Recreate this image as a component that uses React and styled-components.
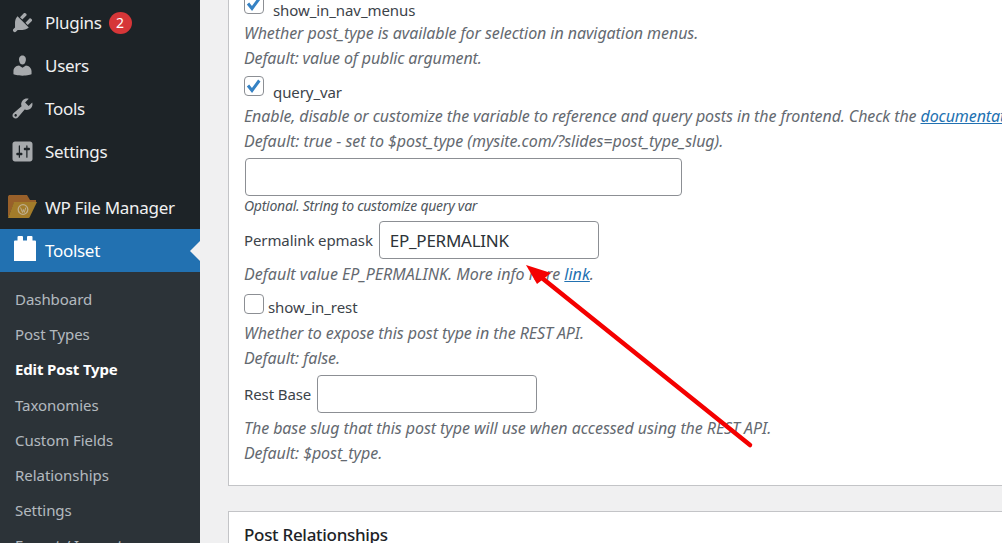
import React from 'react';
import styled, { createGlobalStyle } from 'styled-components';

const Global = createGlobalStyle`
  html, body { margin: 0; padding: 0; height: 543px; overflow: hidden; background: #f0f0f1; }
  #root { height: 543px; }
  * { box-sizing: border-box; }
`;
const Page = styled.div`
  position: relative; display: flex; width: 1002px; height: 543px; overflow: hidden;
  font-family: "Noto Sans", "Open Sans", sans-serif; background: #f0f0f1;
`;
const Sidebar = styled.nav`
  flex: 0 0 200px; width: 200px; height: 543px; background: #1d2327; padding-top: 1px; overflow: hidden;
`;
const MenuItem = styled.div`
  position: relative; display: flex; align-items: center; height: 43px; padding-left: 12px; gap: 12px;
  font-size: 17px; letter-spacing: -0.3px;
  background: ${p => (p.$active ? '#2271b1' : 'transparent')};
  margin-top: ${p => p.$gap || 0}px;
  color: ${p => (p.$active ? '#fff' : '#f0f0f1')};
`;
const IconSlot = styled.span`
  display: flex; align-items: center; justify-content: center; width: 21px; height: 21px; flex: none;
`;
const Badge = styled.span`
  display: flex; align-items: center; justify-content: center; width: 23px; height: 22px; border-radius: 50%;
  background: #d63638; color: #fff; font-size: 14px; margin-left: -5px; letter-spacing: 0;
`;
const Notch = styled.span`
  position: absolute; right: 0; top: 50%; margin-top: -10px; border: 10px solid transparent;
  border-left-width: 0; border-right-color: #f0f0f1;
`;
const SubMenu = styled.div`
  background: #2c3338; padding-top: 10px; height: 300px;
`;
const SubItem = styled.div`
  height: 35.2px; line-height: 35.2px; padding-left: 15px; font-size: 15px;
  letter-spacing: ${p => (p.$current ? '-0.15px' : '-0.05px')};
  color: ${p => (p.$current ? '#fff' : 'rgba(240,246,252,.7)')};
  font-weight: ${p => (p.$current ? 700 : 400)};
`;
const Main = styled.main`
  flex: 1; min-width: 0; padding-left: 28px; margin-top: -27px;
`;
const Card = styled.section`
  width: 900px; background: #fff; border: 1px solid #c3c4c7; border-right: 0;
  padding: ${p => p.$pad || '0 15px'};
  margin-bottom: 25px; height: ${p => p.$h}px;
`;
const CardSpacer = styled.div`
  height: 20px;
`;
const CheckRow = styled.label`
  display: flex; align-items: flex-start; height: 20px;
  margin-top: ${p => p.$mt || 0}px; gap: ${p => p.$gap || 9}px;
  font-size: 15px; color: #3c434a; letter-spacing: -0.08px;
`;
const CheckBox = styled.span`
  flex: none; display: flex; align-items: center; justify-content: center; width: 20px; height: 20px;
  border: 1px solid #8c8f94; border-radius: 4px; background: #fff;
`;
const CheckLabel = styled.span`
  line-height: 20px; margin-top: ${p => p.$mt || 0}px;
`;
const Hint = styled.p`
  margin: ${p => p.$mt || 0}px 0 0; font-size: 16px; line-height: 24.6px; height: 24.6px; font-style: italic;
  color: #646970; white-space: nowrap; letter-spacing: ${p => p.$sp || '-0.07px'};
`;
const SmallHint = styled.p`
  margin: 0; font-size: 14px; line-height: 20px; font-style: italic; color: #50575e; white-space: nowrap;
  letter-spacing: -0.25px;
`;
const Link = styled.a`
  color: #2271b1; text-decoration: underline;
`;
const TextInput = styled.div`
  display: flex; align-items: center; flex: none;
  width: ${p => p.$w}px; height: 38px; margin-left: ${p => p.$ml || 0}px; margin-top: ${p => p.$mt || 0}px;
  padding: 0 10px; background: #fff; border: 1px solid #8c8f94; border-radius: 4px;
  font-size: 17px; color: #2c3338; letter-spacing: -0.25px;
`;
const FieldRow = styled.div`
  display: flex; align-items: center; gap: 6px; margin-top: ${p => p.$mt || 0}px;
  font-size: 15px; color: #3c434a; letter-spacing: -0.1px;
`;
const CardTitle = styled.h2`
  margin: 0; font-size: 17px; line-height: 24px; font-weight: 500; color: #1d2327; letter-spacing: -0.3px;
`;
const ArrowLayer = styled.svg`
  position: absolute; left: 0; top: 0; pointer-events: none;
`;
const DashSvg = styled.svg`
  flex: none;
`;
const TickSvg = styled.svg`
  flex: none; margin: -1px;
`;
const FolderSvg = styled.svg`
  flex: none; margin: -2px -5px 0 -4px;
`;
const ToolsetSvg = styled.svg`
  flex: none; margin: -4px 0 0 5px;
`;

const Dash = ({ d, color = '#a7aaad' }) => (
  <DashSvg width="25" height="25" viewBox="0 0 20 20" fill={color}><path d={d} fillRule="evenodd" /></DashSvg>
);
const Tick = () => (
  <TickSvg width="20" height="20" viewBox="0 0 20 20"><path d="M4 9.500l4 5L15.300 4.500" fill="none" stroke="#3582c4" strokeWidth="3" /></TickSvg>
);
const icons = {
  plugin: 'M13.11 4.36L9.87 7.6 8 5.73l3.24-3.24c.35-.34 1.05-.2 1.56.32.52.51.66 1.21.31 1.55zm-8 1.77l.91-1.12 9.01 9.01-1.19.84c-.71.71-2.63 1.16-3.82 1.16H6.14L4.9 17.26c-.59.59-1.54.59-2.12 0-.59-.58-.59-1.53 0-2.12l1.24-1.24v-3.88c0-1.13.4-3.19 1.09-3.89zm7.26 3.97l3.24-3.24c.34-.35 1.04-.21 1.55.31.52.51.66 1.21.31 1.55l-3.24 3.25z',
  users: 'M10 9.25c-2.27 0-2.73-3.44-2.73-3.44C7 4.02 7.82 2 9.97 2c2.16 0 2.98 2.02 2.71 3.81 0 0-.41 3.44-2.68 3.44zm0 2.57L12.72 10c2.39 0 4.52 2.33 4.52 4.53v2.49s-3.65 1.13-7.24 1.13c-3.65 0-7.24-1.13-7.24-1.13v-2.49c0-2.25 1.94-4.48 4.47-4.48z',
  tools: 'M16.68 9.77c-1.34 1.34-3.3 1.67-4.95.99l-5.41 6.52c-.99.99-2.59.99-3.58 0s-.99-2.59 0-3.57l6.52-5.42c-.68-1.65-.35-3.61.99-4.95 1.28-1.28 3.12-1.62 4.72-1.06l-2.89 2.89 2.82 2.82 2.86-2.87c.53 1.58.18 3.39-1.08 4.65zM3.81 16.21c.4.39 1.04.39 1.43 0 .4-.4.4-1.04 0-1.43-.39-.4-1.03-.4-1.43 0-.39.39-.39 1.03 0 1.43z',
  settings: 'M18 16V4c0-1.1-.9-2-2-2H4c-1.1 0-2 .9-2 2v12c0 1.1.9 2 2 2h12c1.1 0 2-.9 2-2zM8 11h1c.55 0 1 .45 1 1s-.45 1-1 1H8v1.5c0 .28-.22.5-.5.5s-.5-.22-.5-.5V13H6c-.55 0-1-.45-1-1s.45-1 1-1h1V5.500c0-.28.22-.5.5-.5s.5.22.5.5V11zm5-2h-1c-.55 0-1-.45-1-1s.45-1 1-1h1V5.500c0-.28.22-.5.5-.5s.5.22.5.5V7h1c.55 0 1 .45 1 1s-.45 1-1 1h-1v5.500c0 .28-.22.5-.5.5s-.5-.22-.5-.5V9z',
};
const FolderIcon = () => (
  <FolderSvg width="30" height="24" viewBox="0 0 30 24">
    <path d="M0 1.500L1 0h18l3 5h6v3H6L0 23z" fill="#98602a" />
    <path d="M6 7h23l-7.500 15.500-1 .5H0z" fill="#a37c2a" />
    <circle cx="15" cy="14.500" r="4.800" fill="none" stroke="#bfae8c" strokeWidth="1.300" />
    <path d="M12.500 12.500l2 5 .8-3 1 3 1.500-5" fill="none" stroke="#bfae8c" strokeWidth="1" />
  </FolderSvg>
);
const ToolsetIcon = () => (
  <ToolsetSvg width="22" height="25" viewBox="0 0 22 25">
    <path d="M0 5.500Q0 4.500 1 4.500h2.500V1q0-1 1-1H8q1 0 1 1v3.500h4V1q0-1 1-1h3.500q1 0 1 1v3.500H21q1 0 1 1V25H0z" fill="#fff" />
  </ToolsetSvg>
);
const subItems = ['Dashboard', 'Post Types', 'Edit Post Type', 'Taxonomies', 'Custom Fields', 'Relationships', 'Settings', 'Export / Import'];

export default function App() {
  return (
    <Page>
      <Global />
      <Sidebar>
        <MenuItem><IconSlot><Dash d={icons.plugin} /></IconSlot><span>Plugins</span><Badge>2</Badge></MenuItem>
        <MenuItem><IconSlot><Dash d={icons.users} /></IconSlot><span>Users</span></MenuItem>
        <MenuItem><IconSlot><Dash d={icons.tools} /></IconSlot><span>Tools</span></MenuItem>
        <MenuItem><IconSlot><Dash d={icons.settings} /></IconSlot><span>Settings</span></MenuItem>
        <MenuItem $gap={13}><IconSlot><FolderIcon /></IconSlot><span>WP File Manager</span></MenuItem>
        <MenuItem $active><IconSlot><ToolsetIcon /></IconSlot><span>Toolset</span><Notch /></MenuItem>
        <SubMenu>
          {subItems.map(s => <SubItem key={s} $current={s === 'Edit Post Type'}>{s}</SubItem>)}
        </SubMenu>
      </Sidebar>
      <Main>
        <Card $h={513}>
          <CardSpacer />
          <CheckRow $gap={9}><CheckBox><Tick /></CheckBox><CheckLabel $mt={6}>show_in_nav_menus</CheckLabel></CheckRow>
          <Hint $mt={7}>Whether post_type is available for selection in navigation menus.</Hint>
          <Hint $sp="-0.13px">Default: value of public argument.</Hint>
          <CheckRow $mt={6} $gap={9}><CheckBox><Tick /></CheckBox><CheckLabel $mt={6}>query_var</CheckLabel></CheckRow>
          <Hint $mt={8} $sp="-0.105px">Enable, disable or customize the variable to reference and query posts in the frontend. Check the <Link>documentation</Link>.</Hint>
          <Hint $sp="-0.04px">Default: true - set to $post_type (mysite.com/?slides=post_type_slug).</Hint>
          <TextInput $w={437} $ml={1} $mt={5} />
          <SmallHint>Optional. String to customize query var</SmallHint>
          <FieldRow $mt={5}>
            <span>Permalink epmask</span>
            <TextInput $w={220}>EP_PERMALINK</TextInput>
          </FieldRow>
          <Hint $mt={3} $sp="0.02px">Default value EP_PERMALINK. More info here <Link>link</Link>.</Hint>
          <CheckRow $mt={7} $gap={4}><CheckBox /><CheckLabel $mt={3}>show_in_rest</CheckLabel></CheckRow>
          <Hint $mt={7}>Whether to expose this post type in the REST API.</Hint>
          <Hint>Default: false.</Hint>
          <FieldRow $mt={5}>
            <span>Rest Base</span>
            <TextInput $w={220} />
          </FieldRow>
          <Hint $mt={3}>The base slug that this post type will use when accessed using the REST API.</Hint>
          <Hint>Default: $post_type.</Hint>
        </Card>
        <Card $h={100} $pad="11px 15px">
          <CardTitle>Post Relationships</CardTitle>
        </Card>
      </Main>
      <ArrowLayer width="1002" height="543" viewBox="0 0 1002 543">
        <path d="M750 445L537 274" stroke="#f40000" strokeWidth="4.500" strokeLinecap="round" fill="none" />
        <path d="M526 265l25 8-14 11z" fill="#f40000" />
      </ArrowLayer>
    </Page>
  );
}
